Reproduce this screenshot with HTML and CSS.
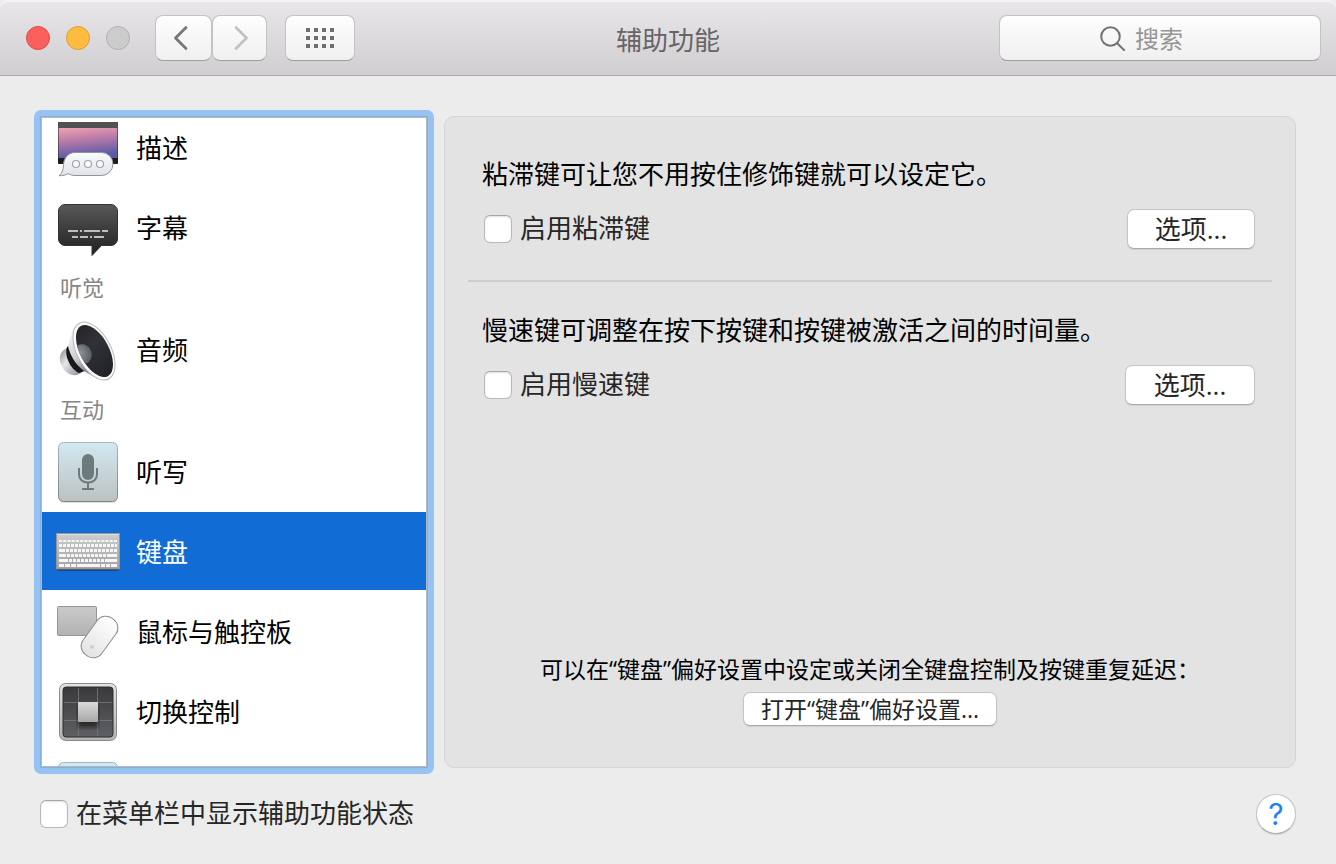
FILE: index.html
```html
<!DOCTYPE html>
<html lang="zh-CN">
<head>
<meta charset="utf-8">
<meta name="viewport" content="width=device-width, initial-scale=1">
<title>辅助功能</title>
<link rel="stylesheet" href="styles.css">
</head>
<body>
<header class="toolbar">
  <div class="toolbar-left">
    <div class="lights">
      <button class="light light-close" aria-label="关闭"></button>
      <button class="light light-min" aria-label="最小化"></button>
      <button class="light light-zoom" aria-label="缩放" disabled></button>
    </div>
    <div class="nav-group">
      <button class="tool-btn tool-back" aria-label="后退">
        <svg width="56" height="44" viewBox="0 0 56 44"><path d="M30 11.500 19.500 22 30 32.500" fill="none" stroke="#777" stroke-width="2.800" stroke-linecap="round" stroke-linejoin="round"/></svg>
      </button>
      <button class="tool-btn tool-forward" aria-label="前进">
        <svg width="54" height="44" viewBox="0 0 54 44"><path d="M23 11.500 33.500 22 23 32.500" fill="none" stroke="#c2c2c2" stroke-width="2.800" stroke-linecap="round" stroke-linejoin="round"/></svg>
      </button>
    </div>
    <button class="tool-btn tool-grid" aria-label="显示全部">
      <svg width="28" height="20" viewBox="0 0 28 20" fill="#6e6e6e"><path d="M0 0h4v4H0zM8 0h4v4H8zM16 0h4v4h-4zM24 0h4v4h-4zM0 8h4v4H0zM8 8h4v4H8zM16 8h4v4h-4zM24 8h4v4h-4zM0 16h4v4H0zM8 16h4v4H8zM16 16h4v4h-4zM24 16h4v4h-4z"/></svg>
    </button>
  </div>
  <h1 class="title">辅助功能</h1>
  <label class="search">
    <svg width="26" height="26" viewBox="0 0 26 26" fill="none" stroke="#727272" stroke-width="2"><circle cx="10.500" cy="11.500" r="9.300"/><path d="M17.200 18.200 24.700 25.700"/></svg>
    <input class="search-input" type="text" placeholder="搜索" aria-label="搜索">
  </label>
</header>

<main class="content">
  <nav class="sidebar" aria-label="辅助功能类别">
    <div class="list">
      <ul class="items">
        <li><a class="item" href="#describe">
          <svg class="icon" viewBox="0 0 64 64">
            <defs>
              <linearGradient id="sky" x1="0" y1="0" x2=".2" y2="1"><stop offset="0" stop-color="#f0a3b2"/><stop offset=".45" stop-color="#b87aa8"/><stop offset="1" stop-color="#5a5aa6"/></linearGradient>
              <linearGradient id="bub" x1="0" y1="0" x2="0" y2="1"><stop offset="0" stop-color="#fafbfc"/><stop offset="1" stop-color="#dfe3e8"/></linearGradient>
            </defs>
            <rect x="2" y="7" width="60" height="42" rx="1" fill="#1d1d20"/>
            <rect x="2" y="7" width="60" height="6" rx="1" fill="#515151"/>
            <rect x="2.500" y="13" width="59" height="30" fill="url(#sky)"/>
            <path d="M19 37.500h26.500a11.500 11.500 0 0 1 0 23H19c-2.500 0-4.500-.6-6.500-1.800-2.500 1.300-5.500 2-9.500 2 3.500-3 4.200-6 4.500-10.500C7.500 43 12.500 37.500 19 37.500z" fill="url(#bub)" stroke="#8f939b"/>
            <g fill="#f8f9fa" stroke="#a0a3a8" stroke-width="1.200"><circle cx="20" cy="49" r="3.500"/><circle cx="32" cy="49" r="3.500"/><circle cx="44" cy="49" r="3.500"/></g>
          </svg><span class="name">描述</span></a></li>
        <li><a class="item" href="#captions">
          <svg class="icon" viewBox="0 0 64 64">
            <defs><linearGradient id="cap" x1="0" y1="0" x2="0" y2="1"><stop offset="0" stop-color="#585858"/><stop offset="1" stop-color="#202020"/></linearGradient></defs>
            <path d="M9 9.500h46a6.500 6.500 0 0 1 6.500 6.500v28a6.500 6.500 0 0 1-6.500 6.500H45.500L36 60.500v-10H9A6.500 6.500 0 0 1 2.500 44V16A6.500 6.500 0 0 1 9 9.500z" fill="url(#cap)" stroke="#333"/>
            <path d="M12 36h10m2 0h2m2 0h16m2 0h6M16 42h6m2 0h8m2 0h2m2 0h10" stroke="#bdbdbd" stroke-width="2"/>
          </svg><span class="name">字幕</span></a></li>
        <li class="group">听觉</li>
        <li><a class="item" href="#audio">
          <svg class="icon" viewBox="0 0 64 64">
            <defs>
              <linearGradient id="horn" x1="0" y1="0" x2="1" y2="1"><stop offset="0" stop-color="#fff"/><stop offset=".4" stop-color="#c9c9d0"/><stop offset=".6" stop-color="#86868d"/><stop offset="1" stop-color="#e8e8ec"/></linearGradient>
              <linearGradient id="mag" x1="0" y1="0" x2="1" y2="1"><stop offset="0" stop-color="#85858b"/><stop offset=".4" stop-color="#e6e6ea"/><stop offset="1" stop-color="#8a8a90"/></linearGradient>
              <radialGradient id="dome" cx=".35" cy=".4" r=".65"><stop offset="0" stop-color="#8f9597"/><stop offset="1" stop-color="#596063"/></radialGradient>
              <linearGradient id="cone" x1="0" y1="0" x2="1" y2="1"><stop offset="0" stop-color="#17181b"/><stop offset=".5" stop-color="#303237"/><stop offset="1" stop-color="#1b1c20"/></linearGradient>
              <clipPath id="mouth"><ellipse cx="38.500" cy="34" rx="14.500" ry="28.500" transform="rotate(-28 38.500 34)"/></clipPath>
            </defs>
            <path d="M11 31C6 33 3 38 4 44s6 13 12 14c4 .6 8-.5 10-3z" fill="url(#mag)"/>
            <path d="M11 30c-3 8 3 22 12 26l6-2L15 27z" fill="#17181a"/>
            <path d="M18 10C14 17 14 23 12 29c2 9 7 18 16 25 8 5 18 11 26 9z" fill="url(#horn)"/>
            <ellipse cx="38" cy="34" rx="17" ry="31.500" transform="rotate(-28 38 34)" fill="#fafafc" stroke="#b9b9c0"/>
            <g clip-path="url(#mouth)">
              <path d="M0 0h64v64H0z" fill="url(#cone)"/>
              <ellipse cx="27" cy="37" rx="8.500" ry="10" transform="rotate(-20 27 37)" fill="url(#dome)"/>
            </g>
          </svg><span class="name">音频</span></a></li>
        <li class="group">互动</li>
        <li><a class="item" href="#dictation">
          <svg class="icon" viewBox="0 0 64 64">
            <defs><linearGradient id="tile" x1="0" y1="0" x2="0" y2="1"><stop offset="0" stop-color="#d3e8f0"/><stop offset="1" stop-color="#bbc2c2"/></linearGradient>
            <linearGradient id="edge" x1="0" y1="0" x2="0" y2="1"><stop offset="0" stop-color="#9fb7bf"/><stop offset="1" stop-color="#7f8686"/></linearGradient></defs>
            <rect x="2.500" y="4" width="59" height="60" rx="5" fill="#e3e3e3"/>
            <rect x="2.500" y="3.500" width="59" height="59" rx="5" fill="url(#tile)" stroke="url(#edge)"/>
            <rect x="26" y="15" width="12" height="26" rx="6" fill="#6d7a7c"/>
            <path d="M23 29v6.500c0 4.500 3.500 8 9 8s9-3.500 9-8V29M32 43.500V50M26 50h12" fill="none" stroke="#6d7a7c" stroke-width="2"/>
          </svg><span class="name">听写</span></a></li>
        <li><a class="item item-selected" href="#keyboard" aria-current="page">
          <svg class="icon" viewBox="0 0 64 64">
            <defs><linearGradient id="kb" x1="0" y1="0" x2="0" y2="1"><stop offset="0" stop-color="#cdcdcd"/><stop offset="1" stop-color="#a3a3a3"/></linearGradient></defs>
            <path d="M2 51h60v1H2z" fill="#0a4794"/>
            <rect x=".5" y="14.500" width="63" height="35" fill="url(#kb)" stroke="#969696"/>
            <path d="M1 15.500h62" stroke="#e1e1e1"/>
            <path d="M0 50.500h64" stroke="#5c5f65"/>
            <g stroke="#f6f6f6" stroke-width="3" fill="none">
              <path d="M3 22h58" stroke-width="2" stroke-dasharray="3 1.230"/>
              <path d="M3 26.500h58" stroke-dasharray="3 1"/>
              <path d="M3 31.500h58" stroke-dasharray="6 1 3 1 3 1 3 1 3 1 3 1 3 1 3 1 3 1 3 1 3 1 3 1 3 1 3 1"/>
              <path d="M3 36.500h58" stroke-dasharray="7 1 3 1 3 1 3 1 3 1 3 1 3 1 3 1 3 1 3 1 3 1 10 1"/>
              <path d="M3 41.500h58" stroke-dasharray="9 1 3 1 3 1 3 1 3 1 3 1 3 1 3 1 3 1 3 1 12 1"/>
              <path d="M3 46.500h5m1 0h5m1 0h5m1 0h23m1 0h4m1 0h4m1 0h6"/>
            </g>
          </svg><span class="name">键盘</span></a></li>
        <li><a class="item" href="#mouse">
          <svg class="icon" viewBox="0 0 64 64">
            <defs><linearGradient id="pad" x1="0" y1="0" x2="0" y2="1"><stop offset="0" stop-color="#cacaca"/><stop offset="1" stop-color="#b2b2b2"/></linearGradient>
            <linearGradient id="mouse" x1="0" y1="0" x2="0" y2="1"><stop offset="0" stop-color="#fff"/><stop offset="1" stop-color="#e3e3e3"/></linearGradient></defs>
            <rect x="1.500" y="7.500" width="39" height="29" rx="1" fill="url(#pad)" stroke="#949494"/>
            <rect x="32" y="15.500" width="23" height="45" rx="10.500" transform="rotate(36 43.500 38)" fill="url(#mouse)" stroke="#8c8c8c"/>
            <circle cx="36" cy="48" r="2" fill="#cfcfcf"/>
          </svg><span class="name">鼠标与触控板</span></a></li>
        <li><a class="item" href="#switch">
          <svg class="icon" viewBox="0 0 64 64">
            <defs><linearGradient id="rim" x1="0" y1="0" x2="0" y2="1"><stop offset="0" stop-color="#e4e4e4"/><stop offset="1" stop-color="#b3b3b3"/></linearGradient>
            <linearGradient id="well" x1="0" y1="0" x2="0" y2="1"><stop offset="0" stop-color="#39393c"/><stop offset="1" stop-color="#5f6064"/></linearGradient>
            <linearGradient id="cube" x1="0" y1="0" x2="0" y2="1"><stop offset="0" stop-color="#dadada"/><stop offset="1" stop-color="#a8a8a8"/></linearGradient>
            <filter id="soft"><feGaussianBlur stdDeviation="2"/></filter></defs>
            <rect x="3.500" y="4.500" width="57" height="57" rx="6" fill="url(#rim)" stroke="#8a8a8a"/>
            <rect x="7" y="8" width="50" height="50" rx="3" fill="url(#well)" stroke="#2f2f31"/>
            <path d="M22.500 9v48M41.500 9v48M8 23.500h48M8 41.500h48" stroke="#77787b" stroke-width=".8"/>
            <rect x="22" y="26" width="20" height="22" fill="#151515" opacity=".7" filter="url(#soft)"/>
            <rect x="22" y="23" width="20" height="20" rx="1" fill="url(#cube)"/>
          </svg><span class="name">切换控制</span></a></li>
        <li><a class="item" href="#more" aria-label="更多">
          <svg class="icon" viewBox="0 0 64 64"><rect x="2.500" y="3.500" width="59" height="59" rx="5" fill="url(#tile)" stroke="url(#edge)"/></svg></a></li>
      </ul>
    </div>
  </nav>

  <section class="panel">
    <div class="setting">
      <p class="text">粘滞键可让您不用按住修饰键就可以设定它。</p>
      <div class="row">
        <label class="check"><input class="box" type="checkbox"><span class="check-text">启用粘滞键</span></label>
        <button class="btn">选项...</button>
      </div>
    </div>
    <div class="setting">
      <p class="text">慢速键可调整在按下按键和按键被激活之间的时间量。</p>
      <div class="row">
        <label class="check"><input class="box" type="checkbox"><span class="check-text">启用慢速键</span></label>
        <button class="btn btn-wide">选项...</button>
      </div>
    </div>
    <div class="note">
      <p class="note-text">可以在“键盘”偏好设置中设定或关闭全键盘控制及按键重复延迟：</p>
      <button class="btn btn-small">打开“键盘”偏好设置...</button>
    </div>
  </section>
</main>

<footer class="footer">
  <label class="check"><input class="box" type="checkbox"><span class="check-text">在菜单栏中显示辅助功能状态</span></label>
  <button class="help" aria-label="帮助">?</button>
</footer>
</body>
</html>
```

FILE: styles.css
```css
* {
  box-sizing: border-box;
}

body {
  display: flex;
  flex-direction: column;
  height: 100vh;
  margin: 0;
  background: #ececec;
  color: #000;
  font-family: "Open Sans", "Noto Sans CJK SC", sans-serif;
  font-size: 26px;
  line-height: 40px;
}

button,
input {
  margin: 0;
  padding: 0;
  border: 0;
  font: inherit;
  color: inherit;
}

svg {
  display: block;
  flex: none;
}

.toolbar {
  display: grid;
  grid-template-columns: 1fr auto 1fr;
  align-items: center;
  padding: 15px 15px 14px;
  border-bottom: 1px solid #aaa8aa;
  border-radius: 8px 8px 0 0;
  background: linear-gradient(#e9e7e9, #d1ced1);
  box-shadow: inset 0 2px #f5f4f5;
}

.toolbar-left {
  display: flex;
  align-items: center;
}

.lights {
  display: flex;
  gap: 16px;
  margin: 0 25px 0 11px;
}

.light {
  width: 24px;
  height: 24px;
  border: 1px solid;
  border-radius: 50%;
}

.light-close {
  background: #fc605c;
  border-color: #e14943;
}

.light-min {
  background: #fdbc40;
  border-color: #dc9f35;
}

.light-zoom {
  background: #cdcccd;
  border-color: #b0afb1;
}

.nav-group {
  display: flex;
  margin-right: 18px;
}

.tool-btn,
.search {
  display: flex;
  align-items: center;
  justify-content: center;
  height: 46px;
  border: 1px solid #c4c2c4;
  border-bottom-color: #a09ea0;
  border-radius: 8px;
  background: linear-gradient(#fefefe, #f0f0f0);
}

.tool-back {
  width: 57px;
}

.tool-forward {
  width: 55px;
}

.tool-grid {
  width: 70px;
}

.title {
  margin: 0;
  padding-top: 4px;
  color: #656466;
  font-size: 26px;
  font-weight: 400;
}

.search {
  justify-self: end;
  justify-content: flex-start;
  gap: 9px;
  width: 322px;
  padding-left: 100px;
}

.search-input {
  flex: 1;
  min-width: 0;
  padding-top: 2px;
  background: none;
  font-size: 24px;
  outline: 0;
}

.search-input::placeholder {
  color: #959595;
  opacity: 1;
}

.content {
  display: flex;
  flex: 1;
  gap: 10px;
  min-height: 0;
  padding: 34px 40px 0 34px;
}

.sidebar {
  display: flex;
  flex: none;
  width: 400px;
  padding: 7px;
  border-radius: 7px;
  background: #97c3f3;
}

.list {
  flex: 1;
  overflow: hidden;
  border: 1px solid #b4b9bf;
  background: #fff;
  box-shadow: 0 0 0 1px #86afdf;
}

.items {
  margin: -10px 0 0;
  padding: 0;
  list-style: none;
}

.item {
  display: flex;
  align-items: center;
  gap: 16px;
  height: 78px;
  margin-bottom: 2px;
  padding: 0 14px;
  color: #000;
  text-decoration: none;
}

.item-selected {
  background: #116cd6;
  color: #fff;
}

.name {
  padding-top: 2px;
}

.icon {
  width: 64px;
  height: 64px;
}

.group {
  height: 42px;
  padding-left: 18px;
  color: #868686;
  font-size: 22px;
  line-height: 38px;
}

.panel {
  display: flex;
  flex: 1;
  flex-direction: column;
  margin: 6px 0;
  padding: 9px 23px 41px;
  border: 1px solid #d5d5d5;
  border-radius: 10px;
  background: #e3e3e3;
}

.setting {
  padding: 28px 17px 31px 14px;
}

.setting + .setting {
  border-top: 2px solid #cdcdcd;
}

.text,
.note-text {
  margin: 0;
}

.row {
  display: flex;
  align-items: center;
  justify-content: space-between;
  margin-top: 15px;
}

.check {
  display: flex;
  align-items: center;
  gap: 8px;
  color: #262626;
}

.check-text {
  padding-bottom: 2px;
  line-height: 38px;
}

.row .check {
  padding-left: 2px;
}

.box {
  appearance: none;
  flex: none;
  width: 28px;
  height: 28px;
  border: 1px solid #b9b9b9;
  border-top-color: #a6a6a6;
  border-radius: 6px;
  background: #fff;
  box-shadow: inset 0 1px 2px #e0e0e0;
}

.btn {
  width: 128px;
  height: 40px;
  border: 1px solid #c4c4c4;
  border-bottom-color: #a9a9a9;
  border-radius: 7px;
  background: #fff;
  box-shadow: 0 1px 1px #d0d0d0;
  color: #262626;
  line-height: 38px;
}

.btn-wide {
  width: 130px;
}

.note {
  display: flex;
  flex-direction: column;
  align-items: center;
  gap: 3px;
  margin-top: auto;
  font-size: 23px;
}

.btn-small {
  width: 254px;
  height: 34px;
  line-height: 32px;
}

.footer {
  display: flex;
  align-items: center;
  justify-content: space-between;
  padding: 20px 40px 30px;
}

.help {
  width: 40px;
  height: 40px;
  border: 1px solid #c6c6c6;
  border-bottom-color: #adadad;
  border-radius: 50%;
  background: #fff;
  box-shadow: 0 1px 1px #cfcfcf;
  color: #1a82fb;
  font-family: Inter, sans-serif;
  font-size: 30px;
  line-height: 38px;
}
```
